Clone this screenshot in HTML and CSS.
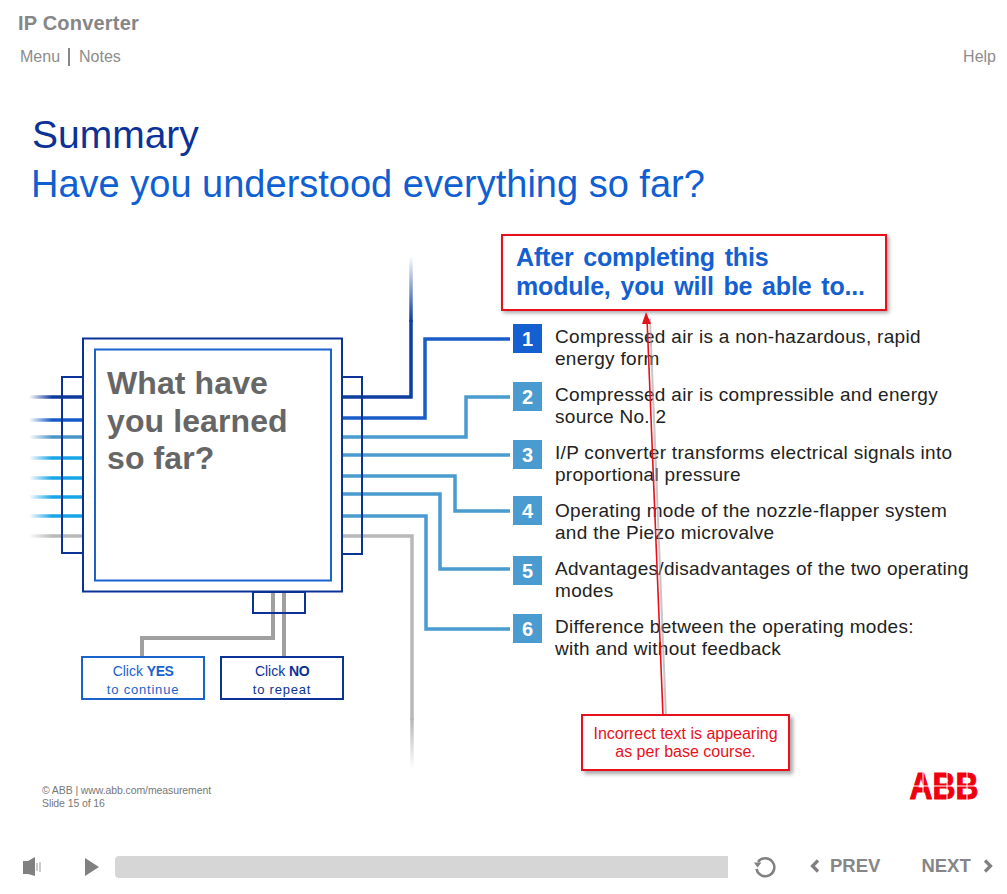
FILE: index.html
```html
<!DOCTYPE html>
<html lang="en">
<head>
  <meta charset="UTF-8">
  <meta name="viewport" content="width=device-width, initial-scale=1">
  <title>IP Converter - Summary</title>
  <link rel="stylesheet" href="styles.css">
</head>
<body>
<div class="page">

  <header class="top">
    <h1 class="course">IP Converter</h1>
    <nav class="links">
      <a class="link link-first">Menu</a>
      <a class="link">Notes</a>
      <a class="link link-help">Help</a>
    </nav>
  </header>

  <section class="heading">
    <h2 class="heading-main">Summary</h2>
    <h3 class="heading-sub">Have you understood everything so far?</h3>
  </section>

  <main class="slide">
    <div class="diagram">
      <svg class="chip" width="513" height="535" viewBox="0 234 513 535" fill="none">
        <defs>
          <linearGradient id="fadeUp" gradientUnits="userSpaceOnUse" x1="0" y1="256" x2="0" y2="320">
            <stop offset="0" stop-color="#0c3f9e" stop-opacity="0"/>
            <stop offset="1" stop-color="#0c3f9e"/>
          </linearGradient>
          <linearGradient id="fadeDown" gradientUnits="userSpaceOnUse" x1="0" y1="720" x2="0" y2="769">
            <stop offset="0" stop-color="#b8b8b8"/>
            <stop offset="1" stop-color="#b8b8b8" stop-opacity="0"/>
          </linearGradient>
          <linearGradient id="pinDark" gradientUnits="userSpaceOnUse" x1="29" y1="0" x2="62" y2="0">
            <stop offset="0" stop-color="#0c3a9c" stop-opacity="0"/>
            <stop offset="0.7" stop-color="#0c3a9c"/>
          </linearGradient>
          <linearGradient id="pinBlue" gradientUnits="userSpaceOnUse" x1="29" y1="0" x2="62" y2="0">
            <stop offset="0" stop-color="#1359c8" stop-opacity="0"/>
            <stop offset="0.7" stop-color="#1359c8"/>
          </linearGradient>
          <linearGradient id="pinSteel" gradientUnits="userSpaceOnUse" x1="29" y1="0" x2="62" y2="0">
            <stop offset="0" stop-color="#4a96c8" stop-opacity="0"/>
            <stop offset="0.7" stop-color="#4a96c8"/>
          </linearGradient>
          <linearGradient id="pinCyan" gradientUnits="userSpaceOnUse" x1="29" y1="0" x2="62" y2="0">
            <stop offset="0" stop-color="#16a5e6" stop-opacity="0"/>
            <stop offset="0.7" stop-color="#16a5e6"/>
          </linearGradient>
          <linearGradient id="pinGrey" gradientUnits="userSpaceOnUse" x1="29" y1="0" x2="62" y2="0">
            <stop offset="0" stop-color="#b8b8b8" stop-opacity="0"/>
            <stop offset="0.7" stop-color="#b8b8b8"/>
          </linearGradient>
        </defs>

        <!-- left pins -->
        <g stroke-width="3.5">
          <path d="M29 397H83" stroke="url(#pinDark)"/>
          <path d="M29 420H83" stroke="url(#pinBlue)"/>
          <path d="M29 437H83" stroke="url(#pinSteel)"/>
          <path d="M29 458H83" stroke="url(#pinCyan)"/>
          <path d="M29 478H83" stroke="url(#pinCyan)"/>
          <path d="M29 497H83" stroke="url(#pinCyan)"/>
          <path d="M29 516H83" stroke="url(#pinCyan)"/>
          <path d="M29 536H83" stroke="url(#pinGrey)"/>
        </g>

        <!-- right wires -->
        <g stroke-width="3.5">
          <path d="M342 536H412V720" stroke="#b8b8b8"/>
          <path d="M412 718V769" stroke="url(#fadeDown)"/>
          <path d="M342 516H426V629H510" stroke="#4a9bd0"/>
          <path d="M342 494H440V569H510" stroke="#4a9bd0"/>
          <path d="M342 476H455V511H510" stroke="#4a9bd0"/>
          <path d="M342 455H510" stroke="#4a9bd0"/>
          <path d="M342 437H466V397H510" stroke="#4a9bd0"/>
          <path d="M342 418H425V339H510" stroke="#1a5cc8"/>
          <path d="M342 397H411V320" stroke="#0c3f9e"/>
          <path d="M411 322V256" stroke="url(#fadeUp)"/>
        </g>

        <!-- bottom wires -->
        <g stroke="#a0a0a0" stroke-width="4">
          <path d="M273 592V638H142V656"/>
          <path d="M284 592V656"/>
        </g>

        <!-- package -->
        <g stroke="#0c3296" stroke-width="2">
          <rect x="62" y="377" width="21" height="176"/>
          <rect x="342" y="377" width="20" height="177"/>
          <rect x="253" y="592" width="52" height="21"/>
          <rect x="83" y="338.500" width="259" height="253"/>
        </g>
        <rect x="95" y="349.500" width="236" height="231" stroke="#1a63cc" stroke-width="2"/>
      </svg>

      <p class="chip-text">What have<br>you learned<br>so far?</p>

      <a class="choice choice-yes">Click <b>YES</b><br><span class="choice-sub">to continue</span></a>
      <a class="choice choice-no">Click <b>NO</b><br><span class="choice-sub">to repeat</span></a>
    </div>

    <div class="goals">
      <div class="goals-title">After completing this<br>module, you will be able to...</div>
      <ol class="goal-list">
        <li class="goal"><span class="num num-on">1</span><span class="goal-text">Compressed air is a non-hazardous, rapid<br>energy form</span></li>
        <li class="goal"><span class="num">2</span><span class="goal-text">Compressed air is compressible and energy<br>source No. 2</span></li>
        <li class="goal"><span class="num">3</span><span class="goal-text">I/P converter transforms electrical signals into<br>proportional pressure</span></li>
        <li class="goal"><span class="num num-up">4</span><span class="goal-text">Operating mode of the nozzle-flapper system<br>and the Piezo microvalve</span></li>
        <li class="goal"><span class="num">5</span><span class="goal-text">Advantages/disadvantages of the two operating<br>modes</span></li>
        <li class="goal"><span class="num">6</span><span class="goal-text">Difference between the operating modes:<br>with and without feedback</span></li>
      </ol>
    </div>
  </main>

  <footer class="foot">
    <div class="foot-text">© ABB | www.abb.com/measurement<br>Slide 15 of 16</div>
    <svg class="abb" width="72" height="30" viewBox="0 0 72 30">
      <text x="36" y="28" text-anchor="middle" textLength="69" lengthAdjust="spacingAndGlyphs" class="abb-text">ABB</text>
      <path d="M0 15H72M15 0V30M39 0V30M59 0V30" stroke="#fff" stroke-width="1"/>
    </svg>
  </footer>

  <div class="player">
    <svg class="mute" width="18" height="20" viewBox="0 0 18 20">
      <path d="M0 4H5L12 0V19L5 17H0Z" fill="#808080"/>
      <path d="M14 6V14M17 5V15" stroke="#999" stroke-width="1"/>
    </svg>
    <svg class="play" width="14" height="18" viewBox="0 0 14 18"><path d="M0 0L14 9L0 18Z" fill="#808080"/></svg>
    <div class="progress"></div>
    <svg class="replay" width="24" height="23" viewBox="0 0 24 23" fill="none">
      <path d="M5 6A9 9 0 1 1 3.500 13" stroke="#808080" stroke-width="2.500"/>
      <path d="M1 6.500H8.500L4.500 11.500Z" fill="#808080"/>
    </svg>
    <a class="step step-prev">
      <svg width="10" height="14" viewBox="0 0 10 14" fill="none"><path d="M8 1.500L2.500 7L8 12.500" stroke="#808080" stroke-width="3.200"/></svg>
      PREV
    </a>
    <a class="step step-next">
      NEXT
      <svg width="10" height="14" viewBox="0 0 10 14" fill="none"><path d="M2 1.500L7.500 7L2 12.500" stroke="#808080" stroke-width="3.200"/></svg>
    </a>
  </div>

  <!-- review comment on top of the slide -->
  <svg class="arrow" width="40" height="410" viewBox="630 310 40 410" fill="none">
    <path d="M648 318L664 716" stroke="#999" stroke-opacity="0.55" stroke-width="2" transform="translate(2 1)"/>
    <path d="M647 318L663 716" stroke="#e8101c" stroke-width="1.600"/>
    <path d="M646 312L651 324L642 324Z" fill="#e8101c"/>
  </svg>
  <div class="comment">Incorrect text is appearing<br>as per base course.</div>

</div>
</body>
</html>
```

FILE: styles.css
```css
body {
  margin: 0;
  font-family: 'Liberation Sans', Arial, sans-serif;
  background: #fff;
  color: #222;
}
.page {
  position: relative;
  width: 1007px;
  height: 894px;
  overflow: hidden;
}
.top {
  height: 110px;
  box-sizing: border-box;
  padding: 12px 11px 0 18px;
}
.course {
  margin: 0;
  font-size: 20px;
  line-height: 23px;
  font-weight: bold;
  color: #868686;
  letter-spacing: 0.2px;
}
.links {
  display: flex;
  margin: 13px 0 0 2px;
  font-size: 16px;
  line-height: 18px;
  color: #8c8c8c;
}
.link-first {
  padding-right: 8px;
  margin-right: 9px;
  border-right: 2px solid #888;
}
.link-help {
  margin-left: auto;
}
.heading {
  height: 124px;
  padding-left: 32px;
}
.heading-main,
.heading-sub {
  margin: 0;
  font-weight: normal;
  line-height: 49px;
}
.heading-main {
  font-size: 39px;
  color: #0c3296;
}
.heading-sub {
  position: relative;
  top: 1px;
  left: -1px;
  font-size: 38px;
  color: #0f5fd2;
}
.slide {
  display: flex;
  height: 535px;
}
.diagram {
  position: relative;
  width: 513px;
  flex: none;
}
.chip {
  display: block;
}
.chip-text {
  position: absolute;
  left: 107px;
  top: 131px;
  margin: 0;
  font-size: 32px;
  line-height: 37.500px;
  font-weight: bold;
  color: #666;
  letter-spacing: 0.1px;
}
.choice {
  position: absolute;
  top: 422px;
  width: 120px;
  height: 36px;
  border: 2px solid;
  background: #fff;
  text-align: center;
  font-size: 14px;
  line-height: 18px;
  padding-top: 4px;
}
.choice b {
  letter-spacing: -0.5px;
}
.choice-sub {
  font-size: 13px;
  letter-spacing: 0.8px;
}
.choice-yes {
  left: 81px;
  border-color: #1a63cc;
  color: #1a63cc;
}
.choice-no {
  left: 220px;
  border-color: #0c3296;
  color: #0c3296;
}
.goals {
  flex: 1;
}
.goals-title {
  width: 369px;
  height: 66px;
  margin-left: -12px;
  border: 2px solid #e8101c;
  box-shadow: 2px 2px 4px rgba(0, 0, 0, 0.35);
  padding: 7px 0 0 13px;
  font-size: 25px;
  line-height: 29px;
  font-weight: bold;
  color: #1560d0;
  letter-spacing: -0.17px;
  word-spacing: 3px;
  white-space: nowrap;
}
.goal-list {
  list-style: none;
  margin: 13px 0 0;
  padding: 0;
}
.goal {
  display: flex;
  gap: 13px;
  height: 58px;
  font-size: 19px;
  line-height: 22px;
  color: #222;
  letter-spacing: 0.3px;
  white-space: nowrap;
}
.goal-text {
  padding-top: 2px;
}
.num {
  flex: none;
  width: 29px;
  height: 29px;
  background: #4a9bd0;
  color: #fff;
  font-size: 20px;
  font-weight: bold;
  line-height: 30px;
  letter-spacing: 0;
  text-align: center;
}
.num-on {
  background: #1560d0;
}
.num-up {
  margin-top: -2px;
}
.foot {
  display: flex;
  justify-content: space-between;
  padding: 2px 27px 0 42px;
  height: 83px;
  box-sizing: border-box;
}
.foot-text {
  padding-top: 13px;
  font-size: 10.500px;
  line-height: 13px;
  color: #777;
  letter-spacing: -0.1px;
}
.abb {
  overflow: visible;
}
.abb-text {
  font-family: 'Liberation Sans', Arial, sans-serif;
  font-size: 36px;
  font-weight: bold;
  fill: #f0000f;
  stroke: #f0000f;
  stroke-width: 1px;
}
.player {
  display: flex;
  align-items: center;
  height: 22px;
  margin-top: 4px;
  padding-left: 23px;
  color: #868686;
}
.mute {
  flex: none;
}
.play {
  flex: none;
  margin-left: 44px;
}
.progress {
  flex: none;
  width: 613px;
  height: 22px;
  margin-left: 16px;
  background: #d6d6d6;
  border-radius: 4px 0 0 4px;
}
.replay {
  flex: none;
  margin-left: 25px;
}
.step {
  display: flex;
  align-items: center;
  gap: 10px;
  font-size: 18.500px;
  font-weight: bold;
  padding-bottom: 2px;
}
.step-prev {
  margin-left: 33px;
}
.step-next {
  margin-left: 41px;
  gap: 12px;
}
.arrow {
  position: absolute;
  left: 630px;
  top: 310px;
}
.comment {
  position: absolute;
  left: 581px;
  top: 714px;
  width: 205px;
  height: 53px;
  border: 2px solid #e8101c;
  background: #fff;
  box-shadow: 3px 3px 4px rgba(0, 0, 0, 0.35);
  font-size: 16px;
  line-height: 18px;
  color: #e8101c;
  text-align: center;
  display: flex;
  align-items: center;
  justify-content: center;
}
```
